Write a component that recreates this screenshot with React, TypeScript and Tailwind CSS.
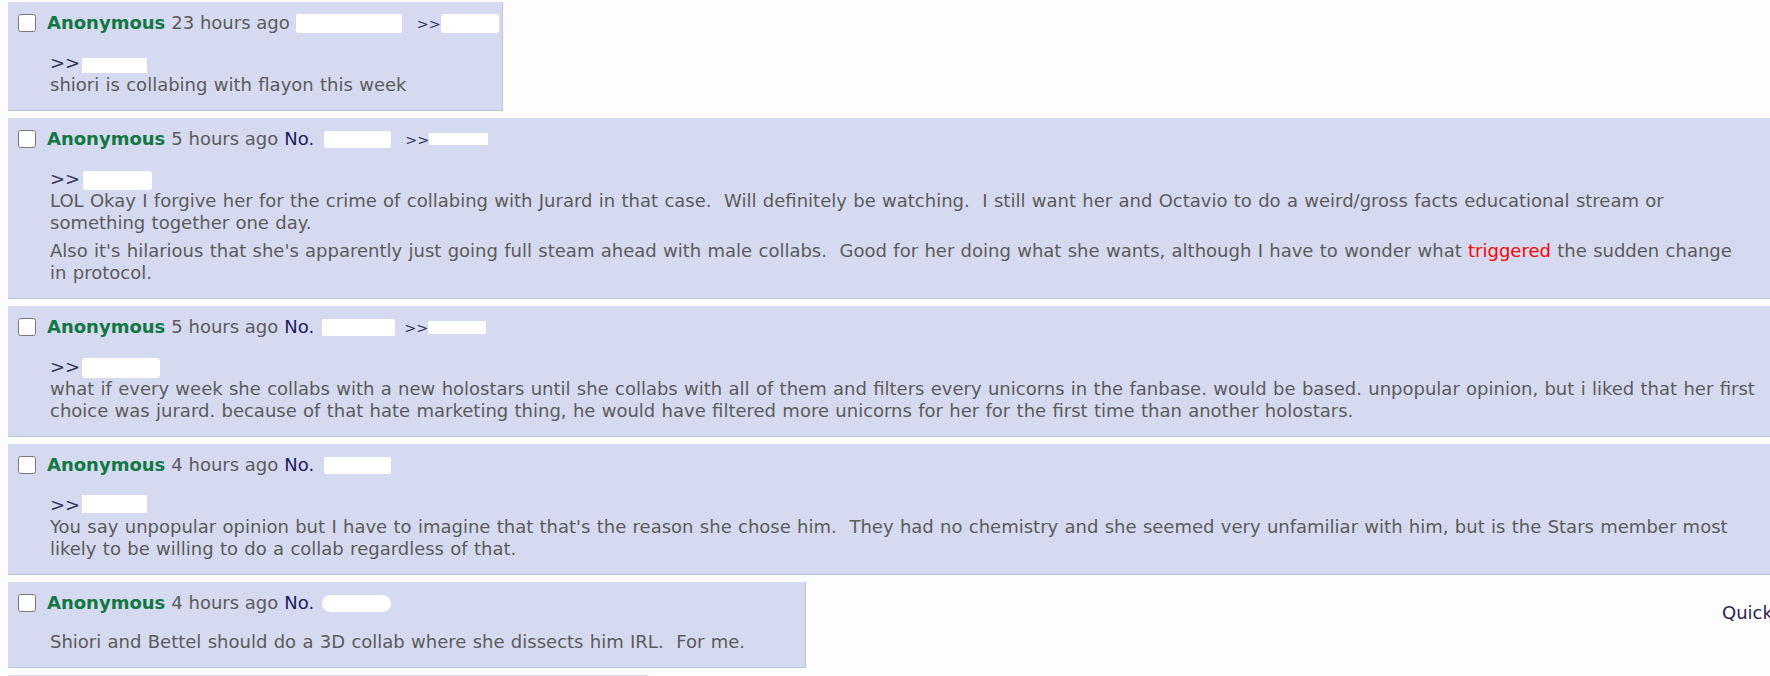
import type { ReactNode } from "react";

type Backlink = { gap: string; box: string };

type PostProps = {
  time: string;
  showNo?: boolean;
  noBox: string;
  backlink?: Backlink;
  quoteBox?: string;
  width: string;
  children: ReactNode;
};

// white blob that hides a post number
function Redact({ className }: { className: string }) {
  return <span className={`inline-block bg-white ${className}`} />;
}

function Post({ time, showNo = true, noBox, backlink, quoteBox, width, children }: PostProps) {
  return (
    <div
      className={`${width} mb-[7px] border-b border-r border-[#b7c5d9] bg-[#d6daf0] px-[2px] pt-[10px] pb-[14px]`}
    >
      {/* post info */}
      <div className="flex items-baseline pl-[8px] leading-[22px]">
        <input type="checkbox" className="m-0 mr-[11px] h-[18px] w-[18px] self-center" />
        <span className="font-bold text-[#117743]">Anonymous</span>
        <span className="ml-[6px]">{time}</span>
        {showNo && <span className="ml-[6px] text-[#1f1b5e]">No.</span>}
        <Redact className={`self-center ${noBox}`} />
        {backlink && (
          <>
            <span className={`${backlink.gap} text-[14.4px] leading-[18px] text-[#34345c]`}>&gt;&gt;</span>
            <Redact className={`self-center ${backlink.box}`} />
          </>
        )}
      </div>

      {/* message, lines broken where the original wraps */}
      <div className="mt-[17px] ml-[40px] mr-[50px] whitespace-pre [word-spacing:0.6px]">
        {quoteBox && (
          <div className="leading-[23px] text-[#34345c]">
            &gt;&gt;
            <Redact className={quoteBox} />
          </div>
        )}
        {children}
      </div>
    </div>
  );
}

export default function App() {
  return (
    <div className="h-[676px] w-full overflow-hidden bg-[#fdfdfd] font-['DejaVu_Sans',sans-serif] text-[18px] text-[#5b5b5b]">
      <div className="w-[1820px] pl-[8px] pt-[2px]">
        <Post
          time="23 hours ago"
          showNo={false}
          noBox="ml-[6px] h-[19px] w-[106px] rounded-[2px]"
          backlink={{ gap: "ml-[15px]", box: "h-[19px] w-[58px] rounded-[3px]" }}
          quoteBox="ml-[2px] h-[15px] w-[65px] align-[-4px]"
          width="w-[495px]"
        >
          <p className="leading-[22px]">shiori is collabing with flayon this week</p>
        </Post>

        <Post
          time="5 hours ago"
          noBox="ml-[10px] h-[17px] w-[67px] rounded-[2px]"
          backlink={{ gap: "ml-[14px]", box: "h-[12px] w-[59px]" }}
          quoteBox="ml-[3px] h-[19px] w-[69px] rounded-[3px] align-[-5px]"
          width="w-[1794px]"
        >
          <p className="leading-[22px]">
            LOL Okay I forgive her for the crime of collabing with Jurard in that case.  Will definitely be watching.  I still want her and Octavio to do a weird/gross facts educational stream or
            <br />
            something together one day.
          </p>
          <p className="mt-[6px] leading-[22px]">
            Also it's hilarious that she's apparently just going full steam ahead with male collabs.  Good for her doing what she wants, although I have to wonder what{" "}
            <span className="font-['Comic_Sans_MS','DejaVu_Sans',sans-serif] text-[#ff0000]">triggered</span> the sudden change
            <br />
            in protocol.
          </p>
        </Post>

        <Post
          time="5 hours ago"
          noBox="ml-[8px] h-[17px] w-[73px] rounded-[2px]"
          backlink={{ gap: "ml-[9px]", box: "h-[13px] w-[58px]" }}
          quoteBox="ml-[2px] h-[20px] w-[78px] rounded-[4px] align-[-5px]"
          width="w-[1794px]"
        >
          <p className="leading-[22px]">
            what if every week she collabs with a new holostars until she collabs with all of them and filters every unicorns in the fanbase. would be based. unpopular opinion, but i liked that her first
            <br />
            choice was jurard. because of that hate marketing thing, he would have filtered more unicorns for her for the first time than another holostars.
          </p>
        </Post>

        <Post
          time="4 hours ago"
          noBox="ml-[10px] h-[17px] w-[67px] rounded-[2px]"
          quoteBox="ml-[2px] h-[18px] w-[65px] align-[-2px]"
          width="w-[1794px]"
        >
          <p className="leading-[22px]">
            You say unpopular opinion but I have to imagine that that's the reason she chose him.  They had no chemistry and she seemed very unfamiliar with him, but is the Stars member most
            <br />
            likely to be willing to do a collab regardless of that.
          </p>
        </Post>

        <div className="grid grid-cols-[1714px_auto]">
          <Post time="4 hours ago" noBox="ml-[8px] h-[17px] w-[69px] rounded-[9px]" width="w-[798px]">
            <p className="leading-[22px]">Shiori and Bettel should do a 3D collab where she dissects him IRL.  For me.</p>
          </Post>
          <div className="mt-[20px] whitespace-nowrap leading-[22px] text-[#2d1f52]">Quick Reply</div>
        </div>

        <div className="h-[40px] w-[639px] border-r border-[#b7c5d9] bg-[#d6daf0]" />
      </div>
    </div>
  );
}
